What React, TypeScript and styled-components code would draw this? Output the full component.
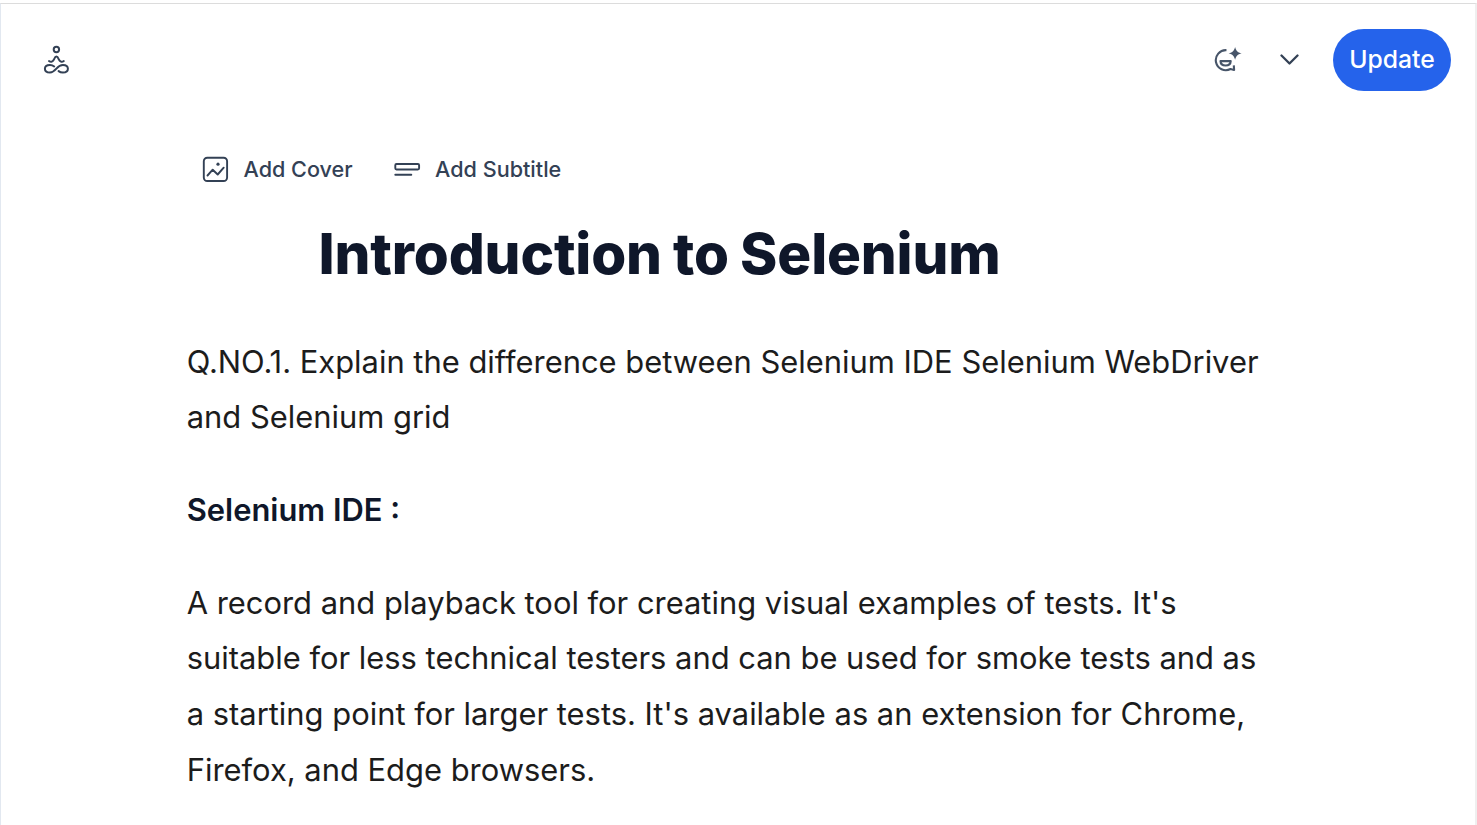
import React from 'react';
import styled, { createGlobalStyle } from 'styled-components';

const GlobalStyle = createGlobalStyle`
  * { box-sizing: border-box; }
  body { margin: 0; background: #fff; font-family: Inter, "Liberation Sans", sans-serif; }
`;

const Page = styled.main`
  height: 822px;
  margin-top: 3px;
  border-top: 1px solid #dcdcdc;
  border-left: 1px solid #e2e8f0;
  border-right: 2px solid #efefef;
  overflow: hidden;
`;

const TopBar = styled.header`
  display: flex;
  align-items: center;
  justify-content: space-between;
  height: 112px;
  padding: 0 24px 0 42px;
`;

const Actions = styled.div`
  display: flex;
  align-items: center;
`;

const IconButton = styled.button<{ $gap: number }>`
  display: flex;
  padding: 0;
  margin-right: ${(p) => p.$gap}px;
  border: 0;
  background: none;
  color: #334155;
`;

const UpdateButton = styled.button`
  width: 118px;
  height: 62px;
  padding: 0 0 2px;
  border: 0;
  border-radius: 31px;
  background: #2563eb;
  color: #fff;
  font: 500 24.7px/38px Inter, "Liberation Sans", sans-serif;
`;

const Tools = styled.nav`
  display: flex;
  align-items: center;
  gap: 40px;
  height: 40px;
  margin: 33px 0 0 200px;
`;

const Tool = styled.button`
  display: flex;
  align-items: center;
  gap: 14.5px;
  padding: 0;
  border: 0;
  background: none;
  color: #334155;
  font: 500 21.6px/34px Inter, "Liberation Sans", sans-serif;
  white-space: nowrap;
`;

const Title = styled.h1`
  margin: 30px 0 0 317.5px;
  color: #0f172a;
  font-size: 56.6px;
  line-height: 70px;
  font-weight: 800;
  letter-spacing: -0.16px;
  word-spacing: -1px;
  white-space: nowrap;
`;

const Body = styled.article`
  width: 1100px;
  margin: 44.6px 0 0 185.7px;
  color: #1c1c1c;
  font-size: 30.9px;
  line-height: 55.62px;
`;

const Paragraph = styled.p`
  margin: 0 0 37.2px;
  font-weight: 400;
  white-space: nowrap;
`;

const Heading = styled.h2`
  margin: 0 0 37.2px;
  color: #0f172a;
  font-size: 30.9px;
  font-weight: 600;
`;

const Lotus = () => (
  <svg width="28" height="30" viewBox="0 0 28 30" fill="none" stroke="currentColor" strokeWidth="2" strokeLinecap="round" strokeLinejoin="round">
    <circle cx="13.4" cy="4.5" r="2.7" />
    <path d="M6 16c2 1.6 4 .6 5-1.6.8-1.8 1.4-2.8 2.4-2.8s1.6 1 2.4 2.8c1 2.200 3 3.200 5 1.600" />
    <path d="M13.400 23.700c1.700-2 3.600-3.800 6.500-3.800 3 0 5 1.500 5 3.800s-2 3.800-5 3.800c-1.900 0-3.100-.5-4.300-1.400M13.400 23.700c-1.700 2-3.600 3.800-6.500 3.800-3 0-5-1.500-5-3.800s2-3.800 5-3.800c1.900 0 3.200.6 4.300 1.500" />
  </svg>
);

const SmileSpark = () => (
  <svg width="28" height="28" viewBox="0 0 28 28" fill="none" stroke="#475569" strokeWidth="2.1">
    <path d="M12.500 4.200A10 10 0 1 0 16.500 23l3.600.9-.3-4.500" strokeLinejoin="round" />
    <path d="M6.500 15.100h10.200c-.1 2.700-2 4.400-5.100 4.400s-5-1.700-5.100-4.400Z" strokeLinejoin="round" />
    <path d="M21.100.9c1.200 4.200 2.300 5.200 6.500 6.400-4.200 1.200-5.300 2.300-6.500 6.500-1.200-4.200-2.300-5.300-6.500-6.500C18.800 6.100 19.900 5.100 21.100.9Z" fill="#475569" stroke="none" />
  </svg>
);

const Chevron = () => (
  <svg width="20" height="12" viewBox="0 0 20 12" fill="none" stroke="currentColor" strokeWidth="2.3" strokeLinecap="round" strokeLinejoin="round">
    <path d="m2.500 1.500 8 8 8-8" />
  </svg>
);

const CoverIcon = () => (
  <svg width="28" height="28" viewBox="0 0 28 28" fill="none" stroke="currentColor" strokeWidth="1.9" strokeLinecap="round" strokeLinejoin="round">
    <rect x="2.800" y="2.700" width="23.300" height="23.300" rx="3.500" />
    <path d="m6.500 20.500 5.200-5.800 5 4.800 6-6.800" />
    <circle cx="17" cy="9.200" r="1.600" fill="currentColor" stroke="none" />
  </svg>
);

const SubtitleIcon = () => (
  <svg width="28" height="28" viewBox="0 0 28 28" fill="none" stroke="currentColor" strokeWidth="1.9" strokeLinecap="round">
    <rect x="2.300" y="9" width="23.800" height="5.500" rx="1.200" />
    <path d="M2.300 19.700h16" />
  </svg>
);

export default function App() {
  return (
    <>
      <GlobalStyle />
      <Page>
        <TopBar>
          <IconButton $gap={0} aria-label="Home"><Lotus /></IconButton>
          <Actions>
            <IconButton $gap={37} aria-label="Assistant"><SmileSpark /></IconButton>
            <IconButton $gap={34} aria-label="More"><Chevron /></IconButton>
            <UpdateButton>Update</UpdateButton>
          </Actions>
        </TopBar>
        <Tools>
          <Tool><CoverIcon />Add Cover</Tool>
          <Tool><SubtitleIcon />Add Subtitle</Tool>
        </Tools>
        <Title>Introduction to Selenium</Title>
        <Body>
          <Paragraph>
            Q.NO.1. Explain the difference between Selenium IDE Selenium WebDriver<br />
            and Selenium grid
          </Paragraph>
          <Heading>Selenium IDE :</Heading>
          <Paragraph>
            A record and playback tool for creating visual examples of tests. It's<br />
            suitable for less technical testers and can be used for smoke tests and as<br />
            a starting point for larger tests. It's available as an extension for Chrome,<br />
            Firefox, and Edge browsers.
          </Paragraph>
        </Body>
      </Page>
    </>
  );
}
